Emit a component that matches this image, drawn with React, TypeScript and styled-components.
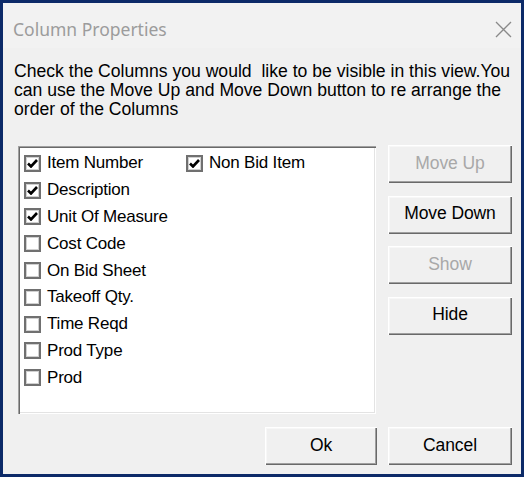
import React from "react";
import styled, { createGlobalStyle } from "styled-components";

const Global = createGlobalStyle`
  html, body { margin: 0; padding: 0; background: #ffffff; }
  body { width: 524px; height: 480px; overflow: hidden; }
`;

const Frame = styled.div`
  box-sizing: border-box;
  width: 524px;
  height: 477px;
  border: 3px solid #0c2a68;
  background: #f0f0f0;
  display: flex;
  flex-direction: column;
  font-family: "Liberation Sans", Arial, sans-serif;
  color: #000;
`;

const TitleBar = styled.div`
  height: 45px;
  flex: none;
  background: #f2f2f2;
  display: flex;
  align-items: center;
  justify-content: space-between;
  padding: 0 9px 0 10px;
`;

const Title = styled.div`
  font-family: "Noto Sans", "Open Sans", sans-serif;
  font-size: 17.5px;
  color: #9c9c9c;
  padding-top: 7px;
`;

const CloseIcon = styled.svg`
  width: 17px;
  height: 17px;
  margin-top: 7px;
`;

const Body = styled.div`
  padding: 14px 9px 0 15px;
  display: grid;
  grid-template-columns: 358px 124px;
  grid-template-rows: auto auto auto;
  align-content: start;
  column-gap: 12px;
`;

const Intro = styled.p`
  grid-column: 1 / span 2;
  margin: 0 0 0 -4px;
  font-size: 17.6px;
  line-height: 19px;
  height: 83px;
  white-space: nowrap;
`;

const ListBox = styled.div`
  box-sizing: border-box;
  height: 268px;
  margin-top: 1px;
  background: #fff;
  box-shadow: inset 1px 1px 0 #a0a0a0, inset 2px 2px 0 #696969,
    inset -1px -1px 0 #ffffff, inset -2px -2px 0 #e3e3e3;
  padding: 4px 0 0 6px;
  display: grid;
  grid-template-columns: 162px 1fr;
  grid-auto-flow: column;
  grid-template-rows: repeat(9, 26.8px);
  align-content: start;
`;

const Item = styled.label`
  display: flex;
  align-items: center;
  gap: 6px;
  font-size: 17px;
  white-space: nowrap;
  letter-spacing: -0.2px;
`;

const Box = styled.span`
  box-sizing: border-box;
  width: 17px;
  height: 17px;
  border: 2px solid #707070;
  box-shadow: inset 0 0 0 1px #d0d0d0;
  background: #fff;
  display: flex;
  align-items: center;
  justify-content: center;
`;

const SideButtons = styled.div`
  display: flex;
  flex-direction: column;
  gap: 12.5px;
`;

const Button = styled.button<{ $disabled?: boolean }>`
  width: 124px;
  height: 38px;
  border: none;
  background: #f0f0f0;
  box-shadow: inset 1px 1px 0 #ffffff, inset -1px -1px 0 #696969,
    inset -2px -2px 0 #a0a0a0, inset 2px 2px 0 #f7f7f7;
  font-family: "Liberation Sans", Arial, sans-serif;
  font-size: 17.5px;
  letter-spacing: -0.1px;
  color: ${(p) => (p.$disabled ? "#a8a8a8" : "#000")};
  padding: 0 0 2px 0;
`;

const Footer = styled.div`
  grid-column: 1 / span 2;
  display: flex;
  justify-content: flex-end;
  gap: 11px;
  padding-top: 13px;
`;

const OkButton = styled(Button)`
  width: 112px;
`;

const Check = () => (
  <svg width="11" height="9" viewBox="0 0 11 9">
    <path d="M1 4.5 L4 7.5 L10 1" fill="none" stroke="#000" strokeWidth="2.6" />
  </svg>
);

const items: [string, boolean][] = [
  ["Item Number", true],
  ["Description", true],
  ["Unit Of Measure", true],
  ["Cost Code", false],
  ["On Bid Sheet", false],
  ["Takeoff Qty.", false],
  ["Time Reqd", false],
  ["Prod Type", false],
  ["Prod", false],
  ["Non Bid Item", true],
];

export default function App() {
  return (
    <>
      <Global />
      <Frame>
        <TitleBar>
          <Title>Column Properties</Title>
          <CloseIcon viewBox="0 0 17 17">
            <path d="M1 1 L16 16 M16 1 L1 16" stroke="#8a8a8a" strokeWidth="1.3" />
          </CloseIcon>
        </TitleBar>
        <Body>
          <Intro>
            Check the Columns you would&nbsp; like to be visible in this view.You
            <br />
            can use the Move Up and Move Down button to re arrange the
            <br />
            order of the Columns
          </Intro>
          <ListBox>
            {items.map(([label, checked]) => (
              <Item key={label}>
                <Box>{checked && <Check />}</Box>
                {label}
              </Item>
            ))}
          </ListBox>
          <SideButtons>
            <Button $disabled>Move Up</Button>
            <Button>Move Down</Button>
            <Button $disabled>Show</Button>
            <Button>Hide</Button>
          </SideButtons>
          <Footer>
            <OkButton>Ok</OkButton>
            <Button>Cancel</Button>
          </Footer>
        </Body>
      </Frame>
    </>
  );
}
